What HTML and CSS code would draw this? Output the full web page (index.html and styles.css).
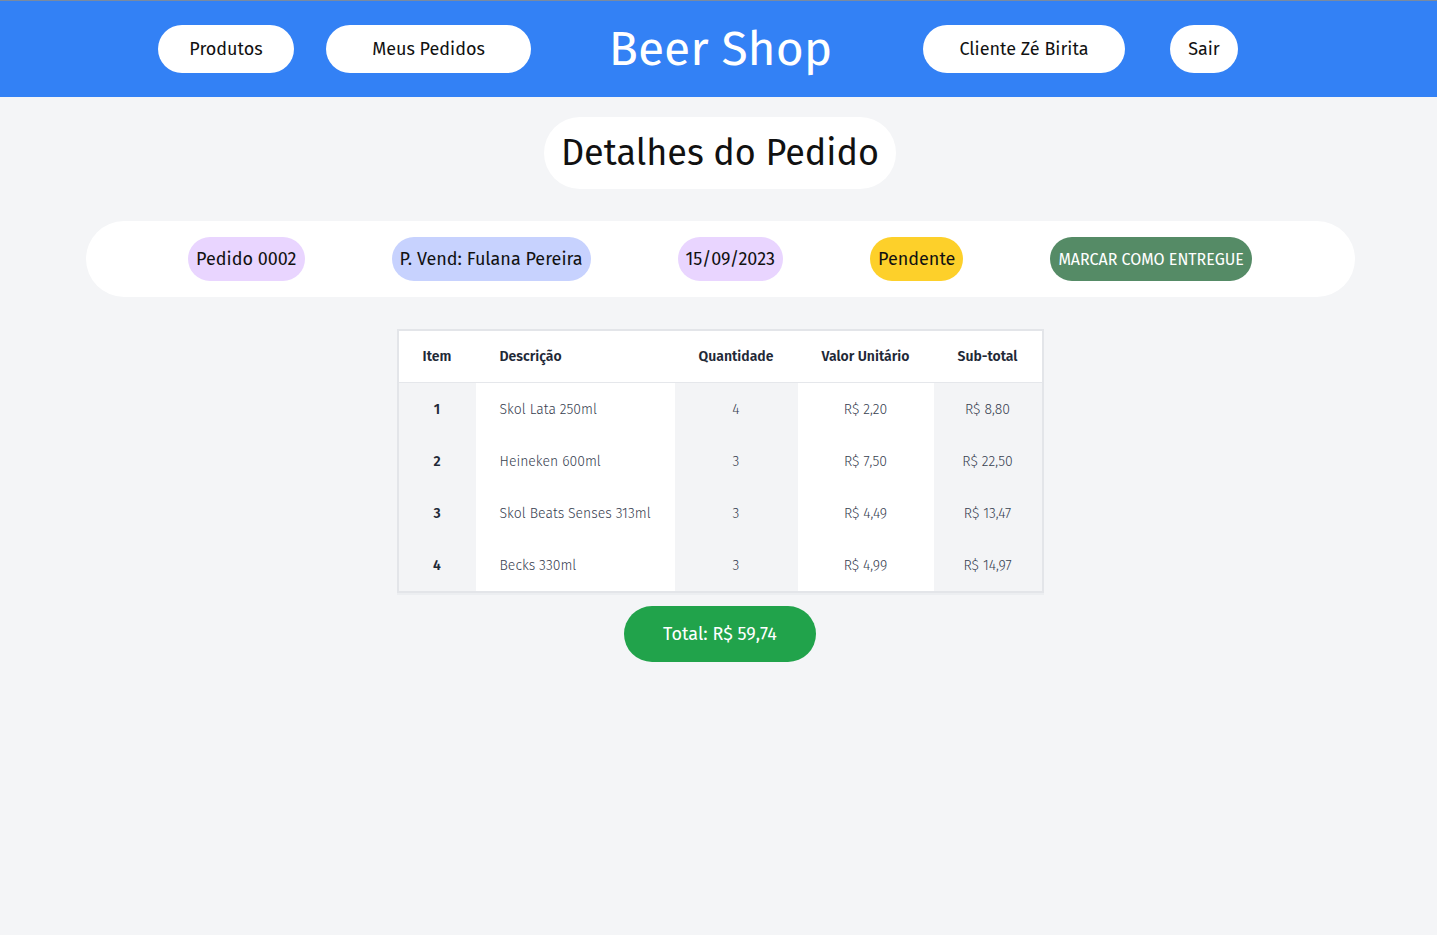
FILE: index.html
```html
<!DOCTYPE html>
<html lang="pt-BR">
<head>
<meta charset="utf-8">
<title>Beer Shop - Detalhes do Pedido</title>
<link rel="stylesheet" href="styles.css">
</head>
<body>
<header class="topbar">
  <nav class="nav">
    <a class="nav-btn btn-produtos" href="#">Produtos</a>
    <a class="nav-btn btn-pedidos" href="#">Meus Pedidos</a>
    <h1 class="brand">Beer Shop</h1>
    <a class="nav-btn btn-cliente" href="#">Cliente Zé Birita</a>
    <a class="nav-btn btn-sair" href="#">Sair</a>
  </nav>
</header>
<main class="content">
  <h2 class="page-title">Detalhes do Pedido</h2>
  <section class="info-bar">
    <span class="chip chip-lilac">Pedido 0002</span>
    <span class="chip chip-indigo">P. Vend: Fulana Pereira</span>
    <span class="chip chip-lilac">15/09/2023</span>
    <span class="chip chip-yellow">Pendente</span>
    <button class="chip chip-green">MARCAR COMO ENTREGUE</button>
  </section>
  <table class="items">
    <colgroup>
      <col class="w-item">
      <col class="w-desc">
      <col class="w-qty">
      <col class="w-unit">
      <col class="w-sub">
    </colgroup>
    <thead>
      <tr>
        <th>Item</th>
        <th class="c-desc">Descrição</th>
        <th>Quantidade</th>
        <th>Valor Unitário</th>
        <th>Sub-total</th>
      </tr>
    </thead>
    <tbody>
      <tr><td class="c-item">1</td><td class="c-desc">Skol Lata 250ml</td><td class="c-qty">4</td><td class="c-unit">R$ 2,20</td><td class="c-sub">R$ 8,80</td></tr>
      <tr><td class="c-item">2</td><td class="c-desc">Heineken 600ml</td><td class="c-qty">3</td><td class="c-unit">R$ 7,50</td><td class="c-sub">R$ 22,50</td></tr>
      <tr><td class="c-item">3</td><td class="c-desc">Skol Beats Senses 313ml</td><td class="c-qty">3</td><td class="c-unit">R$ 4,49</td><td class="c-sub">R$ 13,47</td></tr>
      <tr><td class="c-item">4</td><td class="c-desc">Becks 330ml</td><td class="c-qty">3</td><td class="c-unit">R$ 4,99</td><td class="c-sub">R$ 14,97</td></tr>
    </tbody>
  </table>
  <div class="total">Total: R$ 59,74</div>
</main>
</body>
</html>
```
FILE: styles.css
```css
* { box-sizing: border-box; }
html, body { margin: 0; padding: 0; }
body {
  background: #f4f5f7;
  font-family: "Fira Sans", "Noto Sans", "Open Sans", sans-serif;
  color: #111;
  min-height: 935px;
}
.topbar {
  background: #3381f5;
  border-top: 1px solid #7a8aa0;
  height: 97px;
}
.nav {
  display: flex;
  align-items: center;
  height: 96px;
  padding-left: 158px;
}
.nav-btn {
  display: flex;
  align-items: center;
  justify-content: center;
  height: 48px;
  background: #fff;
  color: #111;
  text-decoration: none;
  font-size: 18px;
  border-radius: 24px;
}
.btn-produtos { width: 136px; }
.btn-pedidos { width: 205px; margin-left: 32px; }
.btn-cliente { width: 202px; }
.btn-sair { width: 68px; margin-left: 45px; }
.brand {
  margin: 0;
  width: 392px;
  padding-right: 13px;
  text-align: center;
  color: #fff;
  font-weight: 400;
  font-size: 48px;
  line-height: 56px;
}
.content {
  display: flex;
  flex-direction: column;
  align-items: center;
  padding-top: 20px;
  padding-left: 3px;
}
.page-title {
  margin: 0;
  background: #fff;
  height: 72px;
  padding: 0 17px;
  border-radius: 36px;
  display: flex;
  align-items: center;
  font-size: 36px;
  font-weight: 400;
}
.info-bar {
  margin-top: 32px;
  width: 1269px;
  height: 76px;
  background: #fff;
  border-radius: 38px;
  display: flex;
  align-items: center;
  justify-content: center;
  gap: 87px;
}
.chip {
  height: 44px;
  border-radius: 22px;
  display: flex;
  align-items: center;
  padding: 0 8px;
  font-size: 18px;
  color: #111;
  border: none;
  font-family: inherit;
}
.chip-lilac { background: #e9d5ff; }
.chip-indigo { background: #c7d2fe; }
.chip-yellow { background: #fdd02a; }
.chip-green {
  background: #558b66;
  color: #fff;
  font-size: 16px;
  font-weight: 400;
}
.items {
  margin-top: 32px;
  width: 647px;
  table-layout: fixed;
  border-collapse: separate;
  border-spacing: 0;
  border: 2px solid #e3e5e9;
  box-shadow: 0 2px 0 #eceef1;
  font-size: 14px;
}
.w-item { width: 77px; }
.w-desc { width: 199px; }
.w-qty { width: 123px; }
.w-unit { width: 136px; }
.w-sub { width: 108px; }
.items th {
  background: #fff;
  height: 52px;
  padding: 0;
  font-weight: 600;
  color: #1f2937;
  text-align: center;
  border-bottom: 1px solid #e5e7eb;
}
.items td {
  height: 52px;
  padding: 0;
  font-weight: 300;
  color: #374151;
  text-align: center;
}
.items .c-desc { text-align: left; padding-left: 24px; }
.items td.c-item { font-weight: 600; color: #1f2937; }
.items td.c-item, .items td.c-qty, .items td.c-sub { background: #f3f4f6; }
.items td.c-desc, .items td.c-unit { background: #fff; }
.total {
  margin-top: 13px;
  width: 192px;
  height: 56px;
  border-radius: 28px;
  background: #21a34b;
  color: #fff;
  font-size: 18px;
  display: flex;
  align-items: center;
  justify-content: center;
}
```
